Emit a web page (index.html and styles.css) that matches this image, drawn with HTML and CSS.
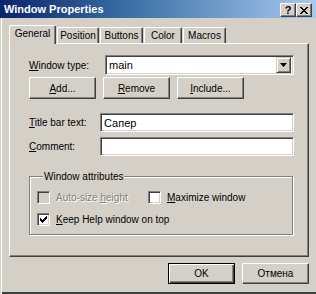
FILE: index.html
```html
<!DOCTYPE html>
<html>
<head>
<meta charset="utf-8">
<link rel="stylesheet" href="styles.css">
</head>
<body>
<div class="window">
  <div class="titlebar">
    <span class="title">Window Properties</span>
    <div class="caption-btns">
      <span class="cbtn cbtn-help">?</span>
      <span class="cbtn cbtn-close">
        <svg width="8" height="7" viewBox="0 0 8 7"><path d="M0 0h2v1h1v1h2v-1h1v-1h2v1h-1v1h-1v1h-1v1h1v1h1v1h1v1h-2v-1h-1v-1h-2v1h-1v1h-2v-1h1v-1h1v-1h1v-1h-1v-1h-1v-1h-1z" fill="#000"/></svg>
      </span>
    </div>
  </div>
  <div class="client">
    <div class="tabs">
      <span class="tab tab-active tab-general">General</span>
      <span class="tab tab-position">Position</span>
      <span class="tab tab-buttons">Buttons</span>
      <span class="tab tab-color">Color</span>
      <span class="tab tab-macros">Macros</span>
    </div>
    <div class="panel">
      <div class="row row-type">
        <span class="label label-type"><u>W</u>indow type:</span>
        <div class="combo">
          <span class="combo-text">main</span>
          <span class="combo-btn">
            <svg width="7" height="4" viewBox="0 0 7 4"><path d="M0 0h7l-3.5 4z" fill="#000"/></svg>
          </span>
        </div>
      </div>
      <div class="row row-btns">
        <span class="btn"><u>A</u>dd...</span>
        <span class="btn"><u>R</u>emove</span>
        <span class="btn"><u>I</u>nclude...</span>
      </div>
      <div class="row row-title">
        <span class="label label-field"><u>T</u>itle bar text:</span>
        <div class="input">Сапер</div>
      </div>
      <div class="row row-comment">
        <span class="label label-field"><u>C</u>omment:</span>
        <div class="input"></div>
      </div>
      <fieldset class="group">
        <legend class="group-legend">Window attributes</legend>
        <div class="checks">
          <div class="check check-disabled">
            <span class="box"></span>
            <span class="check-label">Auto-size <u>h</u>eight</span>
          </div>
          <div class="check">
            <span class="box"></span>
            <span class="check-label"><u>M</u>aximize window</span>
          </div>
          <div class="check check-wide">
            <span class="box">
              <svg width="7" height="7" viewBox="0 0 7 7"><path d="M0 2h1v1h1v1h1v-1h1v-1h1v-1h1v-1h1v3h-1v1h-1v1h-1v1h-1v1h-1v-1h-1v-1h-1z" fill="#000"/></svg>
            </span>
            <span class="check-label"><u>K</u>eep Help window on top</span>
          </div>
        </div>
      </fieldset>
    </div>
    <div class="footer">
      <span class="btn btn-default">OK</span>
      <span class="btn">Отмена</span>
    </div>
  </div>
</div>
</body>
</html>
```

FILE: styles.css
```css
html, body {
  margin: 0;
  padding: 0;
  background: #d4d0c8;
}
body {
  font-family: "Liberation Sans", Arial, sans-serif;
  font-size: 10px;
  color: #000;
}
.window {
  width: 316px;
  height: 294px;
  display: flex;
  flex-direction: column;
  overflow: hidden;
}
.titlebar {
  height: 18px;
  flex: none;
  display: flex;
  align-items: center;
  justify-content: space-between;
  padding: 0 4px 0 4px;
  background: linear-gradient(to right, #0a246a 0%, #3a6ea5 40%, #a6caf0 100%);
}
.title {
  color: #fff;
  font-weight: bold;
  font-size: 11px;
  line-height: 18px;
}
.caption-btns {
  display: flex;
  margin-top: 2px;
}
.cbtn {
  width: 16px;
  height: 14px;
  box-sizing: border-box;
  display: flex;
  align-items: center;
  justify-content: center;
  background: #d4d0c8;
  border: 1px solid;
  border-color: #fff #404040 #404040 #fff;
  box-shadow: inset -1px -1px #808080;
  font-weight: bold;
  font-size: 11px;
  line-height: 11px;
}
.client {
  flex: 1;
  display: flex;
  flex-direction: column;
  padding: 7px 0 0 9px;
  box-shadow: inset 1px 0 #d4d0c8, inset 2px 0 #fff, inset 0 -2px #404040;
}
.tabs {
  height: 18px;
  display: flex;
  align-items: flex-end;
}
.tab {
  box-sizing: border-box;
  height: 16px;
  display: flex;
  align-items: center;
  justify-content: center;
  border-top: 1px solid #fff;
  border-left: 1px solid #fff;
  border-right: 1px solid #404040;
  border-radius: 2px 2px 0 0;
  box-shadow: inset -1px 0 #808080;
  margin-right: 1px;
  padding-bottom: 1px;
}
.tab-active {
  height: 19px;
  margin-bottom: -1px;
  position: relative;
  z-index: 1;
  background: #d4d0c8;
  width: 47px;
  padding-bottom: 3px;
}
.tab-position { width: 42px; }
.tab-buttons { width: 43px; }
.tab-color { width: 38px; }
.tab-macros { width: 43px; }
.panel {
  width: 300px;
  height: 214px;
  box-sizing: border-box;
  border: 1px solid;
  border-color: #fff #404040 #404040 #fff;
  box-shadow: inset -1px -1px #808080;
  padding: 11px 14px 0 19px;
  display: flex;
  flex-direction: column;
}
.row {
  display: flex;
  align-items: center;
}
.label-type { width: 76px; flex: none; }
.label-field { width: 71px; flex: none; }
.combo {
  flex: 1;
  height: 20px;
  box-sizing: border-box;
  background: #fff;
  border: 1px solid;
  border-color: #808080 #fff #fff #808080;
  box-shadow: inset 1px 1px #404040, inset -1px -1px #d4d0c8;
  display: flex;
  align-items: center;
  justify-content: space-between;
  padding: 1px 2px 1px 3px;
  font-size: 11px;
}
.combo-btn {
  width: 15px;
  height: 16px;
  box-sizing: border-box;
  background: #d4d0c8;
  border: 1px solid;
  border-color: #d4d0c8 #404040 #404040 #d4d0c8;
  box-shadow: inset 1px 1px #fff, inset -1px -1px #808080;
  display: flex;
  align-items: center;
  justify-content: center;
}
.row-btns {
  margin-top: 2px;
  gap: 7px;
}
.btn {
  width: 67px;
  height: 22px;
  box-sizing: border-box;
  display: flex;
  align-items: center;
  justify-content: center;
  background: #d4d0c8;
  border: 1px solid;
  border-color: #fff #404040 #404040 #fff;
  box-shadow: inset -1px -1px #808080;
}
.row-title { margin-top: 14px; }
.row-comment { margin-top: 5px; }
.input {
  flex: 1;
  height: 19px;
  box-sizing: border-box;
  background: #fff;
  border: 1px solid;
  border-color: #808080 #fff #fff #808080;
  box-shadow: inset 1px 1px #404040, inset -1px -1px #d4d0c8;
  padding: 2px 3px;
  line-height: 14px;
  font-size: 11px;
}
.group {
  margin: 14px 0 0 0;
  width: 264px;
  box-sizing: border-box;
  border: 1px solid #808080;
  box-shadow: 1px 1px #fff, inset 1px 1px #fff;
  padding: 8px 0 8px 7px;
}
.group-legend {
  padding: 0 1px;
  margin-left: 6px;
  background: #d4d0c8;
  line-height: 13px;
}
.checks {
  display: grid;
  grid-template-columns: 111px 1fr;
  row-gap: 9px;
}
.check {
  display: flex;
  align-items: center;
  gap: 6px;
  height: 13px;
}
.check-wide { grid-column: 1 / 3; }
.box {
  width: 13px;
  height: 13px;
  box-sizing: border-box;
  flex: none;
  background: #fff;
  border: 1px solid;
  border-color: #808080 #fff #fff #808080;
  box-shadow: inset 1px 1px #404040, inset -1px -1px #d4d0c8;
  display: flex;
  align-items: center;
  justify-content: center;
}
.check-disabled .box { background: #d4d0c8; }
.check-disabled .check-label {
  color: #808080;
  text-shadow: 1px 1px #fff;
}
.footer {
  display: flex;
  gap: 7px;
  margin-top: 6px;
  padding-left: 159px;
}
.footer .btn { height: 21px; }
.btn-default {
  border-color: #000;
  box-shadow: inset 1px 1px #fff, inset -1px -1px #404040, inset -2px -2px #808080;
}
```
